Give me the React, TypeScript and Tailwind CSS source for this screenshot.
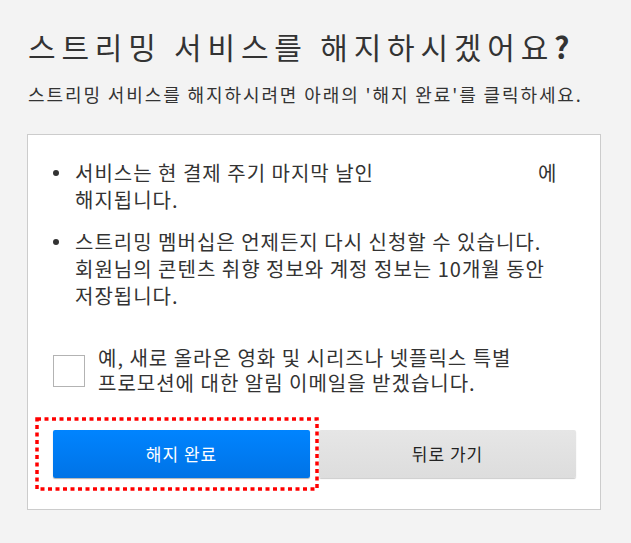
export default function App() {
  const font = { fontFamily: '"Noto Sans CJK KR", "Noto Sans", sans-serif' };
  return (
    <div className="min-h-[543px] w-full bg-[#f3f3f3] text-[#333]" style={font}>
      <div className="pl-[28px] pr-[10px] pt-[26px]">
        {/* Header */}
        <h1 className="whitespace-nowrap text-[30px] leading-[40px] font-normal tracking-[5.8px] text-[#333]">
          스트리밍 서비스를 해지하시겠어요<span className="font-bold">?</span>
        </h1>
        <p className="mt-[15px] whitespace-nowrap text-[18px] leading-[26px] tracking-[1.9px]">
          스트리밍 서비스를 해지하시려면 아래의 '해지 완료'를 클릭하세요.
        </p>
      </div>

      {/* Card */}
      <div className="ml-[27px] mt-[27px] w-[574px] bg-white border border-[#ccc] pl-[25px] pr-[24px] pt-[24px] pb-[31px]">
        <ul className="space-y-[15px] text-[20px] leading-[27px] tracking-[1px]">
          <li className="flex">
            <span className="mt-[11px] mr-[16px] h-[6px] w-[6px] shrink-0 rounded-full bg-[#333]" />
            <span className="whitespace-nowrap">
              서비스는 현 결제 주기 마지막 날인<span className="inline-block w-[164px]" />에
              <br />
              해지됩니다.
            </span>
          </li>
          <li className="flex">
            <span className="mt-[11px] mr-[16px] h-[6px] w-[6px] shrink-0 rounded-full bg-[#333]" />
            <span className="whitespace-nowrap">
              스트리밍 멤버십은 언제든지 다시 신청할 수 있습니다.
              <br />
              회원님의 콘텐츠 취향 정보와 계정 정보는 10개월 동안
              <br />
              저장됩니다.
            </span>
          </li>
        </ul>

        {/* Checkbox */}
        <label className="mt-[36px] flex items-start gap-[13px]">
          <span className="mt-[10px] h-[32px] w-[32px] shrink-0 border border-[#b3b3b3] bg-white" />
          <span className="whitespace-nowrap text-[20px] leading-[25px] tracking-[1px]">
            예, 새로 올라온 영화 및 시리즈나 넷플릭스 특별
            <br />
            프로모션에 대한 알림 이메일을 받겠습니다.
          </span>
        </label>

        {/* Buttons */}
        <div className="mt-[35px] flex gap-[9px]">
          <div className="relative flex-1">
            <button className="h-[48px] w-full rounded-[2px] bg-gradient-to-b from-[#0084ff] to-[#0073e6] text-[17px] tracking-[1px] text-white shadow-[0_1px_1px_rgba(0,0,0,0.3)]">
              해지 완료
            </button>
            <svg className="pointer-events-none absolute -left-[18px] -top-[13px] h-[74px] w-[284px]" viewBox="0 0 284 74">
              <rect x="2" y="2" width="280" height="70" fill="none" stroke="#ff0000" strokeWidth="3.5" strokeDasharray="4 3.5" />
            </svg>
          </div>
          <button className="h-[48px] flex-1 rounded-[2px] bg-gradient-to-b from-[#e6e6e6] to-[#dddddd] text-[17px] tracking-[1px] text-[#222] shadow-[0_1px_1px_rgba(0,0,0,0.2)]">
            뒤로 가기
          </button>
        </div>
      </div>
    </div>
  );
}
